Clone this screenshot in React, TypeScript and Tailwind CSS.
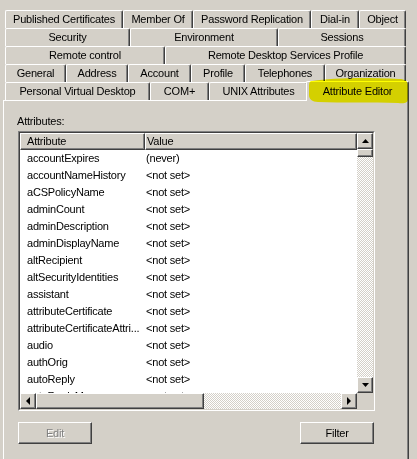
import React from "react";

type TabDef = { label: string; w: string };

const ROWS: TabDef[][] = [
  [
    { label: "Published Certificates", w: "w-[118px]" },
    { label: "Member Of", w: "w-[70px]" },
    { label: "Password Replication", w: "w-[118px]" },
    { label: "Dial-in", w: "w-[48px]" },
    { label: "Object", w: "w-[47px]" },
  ],
  [
    { label: "Security", w: "w-[125px]" },
    { label: "Environment", w: "w-[148px]" },
    { label: "Sessions", w: "w-[128px]" },
  ],
  [
    { label: "Remote control", w: "w-[160px]" },
    { label: "Remote Desktop Services Profile", w: "w-[241px]" },
  ],
  [
    { label: "General", w: "w-[61px]" },
    { label: "Address", w: "w-[62px]" },
    { label: "Account", w: "w-[63px]" },
    { label: "Profile", w: "w-[54px]" },
    { label: "Telephones", w: "w-[80px]" },
    { label: "Organization", w: "w-[81px]" },
  ],
];

const FRONT: TabDef[] = [
  { label: "Personal Virtual Desktop", w: "w-[145px]" },
  { label: "COM+", w: "w-[59px]" },
  { label: "UNIX Attributes", w: "w-[99px]" },
];

const ATTRS: [string, string][] = [
  ["accountExpires", "(never)"],
  ["accountNameHistory", "<not set>"],
  ["aCSPolicyName", "<not set>"],
  ["adminCount", "<not set>"],
  ["adminDescription", "<not set>"],
  ["adminDisplayName", "<not set>"],
  ["altRecipient", "<not set>"],
  ["altSecurityIdentities", "<not set>"],
  ["assistant", "<not set>"],
  ["attributeCertificate", "<not set>"],
  ["attributeCertificateAttri...", "<not set>"],
  ["audio", "<not set>"],
  ["authOrig", "<not set>"],
  ["autoReply", "<not set>"],
  ["autoReplyMessage", "<not set>"],
];

const raised =
  "bg-[#d4d0c8] border border-t-white border-l-white border-r-[#404040] border-b-[#404040] shadow-[inset_-1px_-1px_#808080]";
const checker =
  "bg-[repeating-conic-gradient(#d4d0c8_0_25%,#ffffff_0_50%)] bg-[length:2px_2px]";

function Tab({ tab }: { tab: TabDef }) {
  return (
    <div
      className={`${tab.w} h-[18px] shrink-0 flex items-center justify-center whitespace-nowrap border-l border-t border-r border-l-white border-t-white border-r-[#404040] rounded-t-[2px] shadow-[inset_-1px_0_#808080]`}
    >
      {tab.label}
    </div>
  );
}

function Arrow({ dir }: { dir: "up" | "down" | "left" | "right" }) {
  const pts = {
    up: "0,4 7,4 3.5,0",
    down: "0,0 7,0 3.5,4",
    left: "4,0 4,8 0,4",
    right: "0,0 0,8 4,4",
  }[dir];
  const vertical = dir === "up" || dir === "down";
  return (
    <svg
      width={vertical ? 7 : 4}
      height={vertical ? 4 : 8}
      viewBox={vertical ? "0 0 7 4" : "0 0 4 8"}
      className="block"
    >
      <polygon points={pts} fill="#000" />
    </svg>
  );
}

function ScrollButton({ dir }: { dir: "up" | "down" | "left" | "right" }) {
  return (
    <div className={`${raised} w-[16px] h-[16px] shrink-0 flex items-center justify-center`}>
      <Arrow dir={dir} />
    </div>
  );
}

export default function App() {
  return (
    <div className="relative w-[417px] h-[459px] overflow-hidden bg-[#d4d0c8] text-[11px] tracking-[-0.2px] leading-none text-black font-['Liberation_Sans',Arial,sans-serif] select-none">
      {/* tab rows */}
      <div className="pt-[10px] pl-[5px] flex flex-col">
        {ROWS.map((row, i) => (
          <div key={i} className="flex h-[18px]">
            {row.map((t) => (
              <Tab key={t.label} tab={t} />
            ))}
          </div>
        ))}
        <div className="flex h-[18px] items-end">
          {FRONT.map((t) => (
            <Tab key={t.label} tab={t} />
          ))}
          <div className="relative top-[1px] z-10 -ml-[2px] w-[103px] h-[20px] shrink-0 flex items-center justify-center whitespace-nowrap bg-[#d4d0c8] border-l border-t border-r border-l-white border-t-white border-r-[#404040] rounded-t-[2px] shadow-[inset_-1px_0_#808080] pb-[1px]">
            Attribute Editor
          </div>
        </div>
      </div>

      {/* property page */}
      <div className="ml-[3px] w-[406px] h-[359px] border-l border-t border-r border-l-white border-t-white border-r-[#404040] shadow-[inset_-1px_0_#808080]">
        <div className="pt-[15px] pl-[13px] h-[30px]">Attributes:</div>

        <div className="ml-[14px] w-[357px] h-[280px] border border-t-[#808080] border-l-[#808080] border-r-white border-b-white">
          <div className="w-full h-full border border-t-[#404040] border-l-[#404040] border-r-[#d4d0c8] border-b-[#d4d0c8] grid grid-cols-[337px_16px] grid-rows-[260px_16px]">
            <div className="bg-white overflow-hidden">
              <div className="flex h-[17px]">
                <div className={`${raised} w-[125px] h-full flex items-center pl-[6px]`}>Attribute</div>
                <div className={`${raised} flex-1 h-full flex items-center pl-[1px]`}>Value</div>
              </div>
              {ATTRS.map(([name, value]) => (
                <div key={name} className="flex h-[17px] items-center whitespace-nowrap">
                  <div className="w-[124px] pl-[7px] overflow-hidden">{name}</div>
                  <div className="pl-[2px]">{value}</div>
                </div>
              ))}
            </div>

            <div className="flex flex-col">
              <ScrollButton dir="up" />
              <div className={`${raised} h-[8px] shrink-0`} />
              <div className={`flex-1 ${checker}`} />
              <ScrollButton dir="down" />
            </div>

            <div className="flex">
              <ScrollButton dir="left" />
              <div className={`${raised} w-[168px] h-full shrink-0`} />
              <div className={`flex-1 ${checker}`} />
              <ScrollButton dir="right" />
            </div>
            <div className="bg-[#d4d0c8]" />
          </div>
        </div>

        <div className="mt-[11px] ml-[14px] w-[356px] flex justify-between">
          <div className={`${raised} w-[74px] h-[22px] flex items-center justify-center text-[#808080] [text-shadow:1px_1px_#ffffff]`}>
            Edit
          </div>
          <div className={`${raised} w-[74px] h-[22px] flex items-center justify-center`}>Filter</div>
        </div>
      </div>

      {/* highlighter annotation */}
      <svg
        className="absolute left-0 top-0 z-20 pointer-events-none mix-blend-darken"
        width={417}
        height={459}
        viewBox="0 0 417 459"
      >
        <path
          d="M312,81 C332,78 362,77 399,79 C405,79 408,81 408,86 L408,99 C408,103 404,104 398,103 C372,102 342,103 318,102 C312,102 309,99 309,95 L309,86 C309,82 310,81 312,81 Z"
          fill="#ffff00"
        />
      </svg>
    </div>
  );
}
